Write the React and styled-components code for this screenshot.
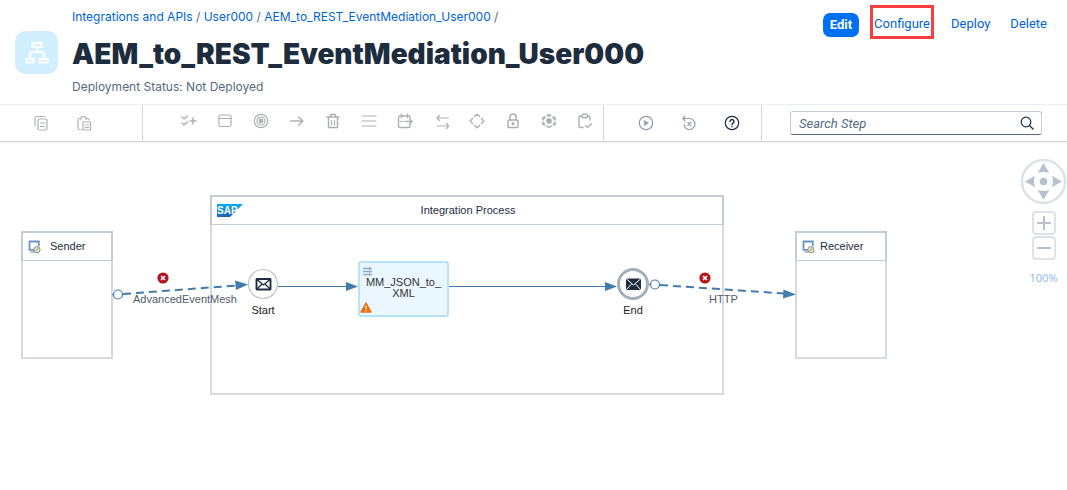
import React from "react";
import styled, { createGlobalStyle } from "styled-components";

const GlobalStyle = createGlobalStyle`
  *, *::before, *::after { box-sizing: border-box; }
  body {
    margin: 0;
    background: #fff;
    color: #1d2d3e;
    font-family: Roboto, "Liberation Sans", sans-serif;
    font-size: 13px;
  }
  button { font-family: inherit; cursor: pointer; }
`;

const Page = styled.div`
  display: flex;
  flex-direction: column;
  min-height: 100vh;
`;

const Header = styled.header`
  display: flex;
  align-items: flex-start;
  padding: 8px 12px 8px 15px;
  border-bottom: 1px solid #e9eeef;
`;

const Avatar = styled.div`
  display: flex;
  align-items: center;
  justify-content: center;
  flex: none;
  width: 43px;
  height: 43px;
  margin: 23px 14px 0 0;
  border-radius: 10px;
  background: #d1efff;
`;

const Heading = styled.div`
  flex: 1;
  min-width: 0;
`;

const Breadcrumb = styled.nav`
  font-family: Inter, sans-serif;
  font-size: 12px;
  line-height: 18px;
  color: #556b82;
`;

const Crumb = styled.a`
  color: #0064d9;
  text-decoration: none;
`;

const Title = styled.h1`
  margin: 10px 0 6px;
  font-family: Inter, Roboto, sans-serif;
  font-size: 28px;
  line-height: 36px;
  font-weight: 900;
`;

const Status = styled.p`
  margin: 0;
  font-family: Inter, sans-serif;
  font-size: 12px;
  line-height: 18px;
  color: #556b82;
`;

const Actions = styled.div`
  display: flex;
  align-items: flex-start;
`;

const ActionButton = styled.button`
  height: 24px;
  margin-top: ${(p) => (p.$primary ? 5 : 4)}px;
  padding: 0 ${(p) => (p.$primary ? 7 : 10)}px;
  border: 0;
  border-radius: 7px;
  background: ${(p) => (p.$primary ? "#0070f2" : "transparent")};
  color: ${(p) => (p.$primary ? "#fff" : "#0064d9")};
  font-size: 13px;
  line-height: 22px;
  font-weight: ${(p) => (p.$primary ? 700 : 400)};

  &:last-child { padding-right: 8px; }
`;

const Callout = styled.div`
  margin: -3px 7px 0 11px;
  padding: 4px 0 0;
  border: 3px solid #f93e3e;

  ${ActionButton} {
    margin: 0;
    padding: 0 1px;
  }
`;

const Toolbar = styled.div`
  display: flex;
  height: 37px;
  border-bottom: 1px solid #d4d6d8;
  box-shadow: 0 1px 2px #eceeee;
`;

const ToolGroup = styled.div`
  display: flex;
  align-items: center;
  gap: ${(p) => p.$gap}px;
  padding: ${(p) => p.$pad};
  border-right: 1px solid #d4d6d8;
`;

const ToolButton = styled.button`
  display: flex;
  width: 16px;
  height: 16px;
  padding: 0;
  border: 0;
  background: none;
  color: ${(p) => p.$color || "#adb0b2"};
`;

const SearchArea = styled.div`
  display: flex;
  flex: 1;
  align-items: center;
  padding: 0 25px 0 28px;
`;

const SearchField = styled.label`
  display: flex;
  flex: 1;
  align-items: center;
  height: 24px;
  padding: 0 7px 0 8px;
  border: 1px solid #c8cdd3;
  border-bottom-color: #556b82;
  border-radius: 3px;
`;

const SearchInput = styled.input`
  flex: 1;
  min-width: 0;
  padding: 0;
  border: 0;
  outline: 0;
  background: none;
  font: italic 13px Roboto, sans-serif;
  &::placeholder { color: #556b82; opacity: 1; }
`;

const Canvas = styled.main`
  position: relative;
  flex: 1;
  min-height: 348px;
  font-family: "Liberation Sans", Arial, sans-serif;
  font-size: 11px;
`;

const Pool = styled.section`
  position: absolute;
  left: ${(p) => p.$x}px;
  top: ${(p) => p.$y}px;
  width: ${(p) => p.$w}px;
  height: ${(p) => p.$h}px;
  border: 2px solid #d5dadd;
`;

const PoolHeader = styled.div`
  display: flex;
  align-items: center;
  height: 30px;
  margin: -2px;
  padding: 0 5px;
  border: 2px solid #c5ccd1;
  border-bottom-width: 1px;
`;

const PoolName = styled.span`
  flex: 1;
  text-align: ${(p) => (p.$center ? "center" : "left")};
  padding: 0 ${(p) => (p.$center ? 24 : 0)}px 2px 0;
  margin-left: ${(p) => p.$gap || 0}px;
`;

const Connectors = styled.svg`
  position: absolute;
  left: 0;
  top: 0;
  width: 100%;
  height: 100%;
  pointer-events: none;
`;

const EventNode = styled.div`
  position: absolute;
  left: ${(p) => p.$x - 30}px;
  top: ${(p) => p.$y - 16}px;
  width: 60px;
  display: flex;
  flex-direction: column;
  align-items: center;
  gap: 4px;
  line-height: 13px;
  color: #222;
`;

const Task = styled.div`
  position: absolute;
  left: 358px;
  top: 119px;
  width: 91px;
  height: 56px;
  padding-top: 14px;
  border: 2px solid #b5e3fa;
  border-radius: 3px;
  background: #ebf7ff;
  color: #333;
  line-height: 11px;
  text-align: center;
`;

const TaskGlyph = styled.svg`
  position: absolute;
  left: ${(p) => p.$x}px;
  top: ${(p) => p.$y}px;
`;

const FlowLabel = styled.span`
  position: absolute;
  left: ${(p) => p.$x}px;
  top: 151px;
  line-height: 13px;
  color: #515c69;
`;

const Navigator = styled.div`
  position: absolute;
  top: 16px;
  right: 0;
  width: 47px;
  display: flex;
  flex-direction: column;
  align-items: center;
`;

const ZoomButton = styled.button`
  display: flex;
  width: 24px;
  height: 24px;
  margin: ${(p) => p.$gap}px 0 0;
  padding: 0;
  align-items: center;
  justify-content: center;
  border: 2px solid #dce2e8;
  border-radius: 4px;
  background: #fff;
`;

const ZoomLevel = styled.output`
  margin-top: 11px;
  font: 11px/14px "Noto Sans", sans-serif;
  color: #8fbcf0;
`;

const Glyph = ({ children }) => (
  <svg width="16" height="16" viewBox="0 0 16 16" fill="none" stroke="currentColor" strokeWidth="1.2" strokeLinecap="round" strokeLinejoin="round" aria-hidden="true">
    {children}
  </svg>
);

const clipboardTools = [
  ["Copy", <><path d="M2 11V3.5A2 2 0 0 1 4 1.500h7.500" /><rect x="5" y="4" width="9" height="11" rx="1.500" /><path d="M7.500 8h4M7.500 11.500h4" /></>],
  ["Paste", <><path d="M5 14.500H3.500a1.500 1.500 0 0 1-1.500-1.500V5a1.500 1.500 0 0 1 1.500-1.500H5M10 3.500h1.500A1.500 1.500 0 0 1 13 5M5 4.500V3l1.500-1.500h2L10 3v1.500" /><path d="M7 7h7.500v8H7zM9.500 10h3M9.500 12.500h3" /></>],
];

const stepTools = [
  ["Events and checks", <path d="m1 4 2 1.800L6.500 3M1 10l2 1.800L6.500 9M9 8h6M12 5v6" strokeWidth="1.500" />],
  ["Participants", <><rect x="2" y="2" width="12" height="11.500" rx="1.500" /><path d="M2 5.500h12" /></>],
  ["Events", <><circle cx="8" cy="8" r="6.700" /><circle cx="8" cy="8" r="4" /><circle cx="8" cy="8" r="1.800" fill="currentColor" /></>],
  ["Connector", <path d="M1.500 8h12.500M9.500 4 14 8l-4.500 4" strokeWidth="1.400" />],
  ["Delete", <><path d="M2 4h12M5.500 4V1.500h5V4M3.500 4v10.500h9V4" strokeWidth="1.500" /><path d="M6.500 7.500v4.500M9.500 7.500v4.500" /></>],
  ["Menu", <path d="M1 3h14M1 8h14M1 13h14" />],
  ["Scheduler", <><path d="M13 5.500V4.500a1.500 1.500 0 0 0-1.500-1.500H3a1.500 1.500 0 0 0-1.500 1.500V13A1.500 1.500 0 0 0 3 14.500h8.500A1.500 1.500 0 0 0 13 13v-1.500M4.500 1v3.500M10.500 1v3.500M12.500 6l2.700 2.500-2.700 2.500M8.500 8.500h6.500" strokeWidth="1.400" /><path d="M3.500 8.500h.2M6 8.500h.2" strokeWidth="1.700" /></>],
  ["Mapping", <path d="M16 5H4M6.500 2.500 4 5l2.500 2.500M4 13h12M13.500 10.500l2.500 2.500-2.500 2.500" />],
  ["Routing", <path d="M5.500 3.500 8 1.200l2.500 2.300M12.500 5.500 14.800 8l-2.300 2.500M10.500 12.500 8 14.800l-2.500-2.300M3.500 10.500 1.200 8l2.300-2.500" strokeWidth="1.500" />],
  ["Security", <><rect x="3" y="7" width="10" height="7.500" rx="1" strokeWidth="1.500" /><path d="M5 7V4a3 3 0 0 1 6 0v3" strokeWidth="1.500" /><circle cx="8" cy="10.700" r="1" fill="currentColor" /></>],
  ["Persistence", <g fill="currentColor" strokeWidth=".6"><path d="M5.500 2.300 8 1l2.500 1.300L8 3.600ZM1.500 4.500l2.200-1.200 1 1.300L2.800 6l.2 1.500-1.500-.7ZM14.500 4.500l-2.200-1.200-1 1.300L13.200 6l-.2 1.500 1.500-.7ZM1.500 9l2.200 1.200v2.600l-2.200-1.200ZM14.500 9l-2.200 1.200v2.600l2.200-1.200ZM5.500 12.500l2.500 1.200 2.500-1.200v1L8 15l-2.500-1.500Z" /><path d="m8 5.300 2.400 1.300v2.800L8 10.700 5.600 9.400V6.600Z" /></g>],
  ["Validator", <path d="M6 14.500H3.500A1.500 1.500 0 0 1 2 13V4.500A1.500 1.500 0 0 1 3.500 3H5M10.500 3h1A1.500 1.500 0 0 1 13 4.500V7M5 4.500V2.500L6.500 1h2.500L10.500 2.500v2H5M8.500 12.500l2 2L14.500 11" strokeWidth="1.400" />],
];

const runTools = [
  ["Simulate", <><circle cx="8" cy="8" r="6.700" /><path d="m6.500 5.500 4 2.500-4 2.500Z" fill="currentColor" strokeWidth=".6" /></>, "#8f9bab"],
  ["Reset", <><path d="M2 3.500h6.500a5.500 5.500 0 1 1-5.500 6M4 1.200 1.800 3.500 4 5.800" /><path d="m6.800 7.300 3.400 3.400M10.200 7.300l-3.400 3.400" /></>, "#8f9bab"],
  ["Help", <><circle cx="8" cy="8" r="6.700" /><path d="M6 6.500a2 2 0 1 1 3 1.700c-.7.400-1 .8-1 1.500M8 11.600v.1" strokeWidth="1.400" /></>, "#1d2d3e"],
];

const ToolSet = ({ tools }) =>
  tools.map(([name, art, color]) => (
    <ToolButton key={name} aria-label={name} $color={color}>
      <Glyph>{art}</Glyph>
    </ToolButton>
  ));

const ParticipantIcon = () => (
  <svg width="13" height="14" viewBox="0 0 13 14" fill="none" aria-hidden="true">
    <path d="M6 9.800H1.500V1.500h9.300V6" stroke="#6c93c4" strokeWidth="1.800" />
    <path d="M2.500 12h4" stroke="#7c98b8" strokeWidth="1.200" />
    <circle cx="9" cy="9.700" r="3.100" fill="#f0eda6" stroke="#7d91a4" />
    <path d="m7.500 10.800 3-2.500" stroke="#6f8698" />
  </svg>
);

const SapLogo = () => (
  <svg width="26" height="13" viewBox="0 0 26 13" role="img" aria-label="SAP">
    <defs>
      <linearGradient id="sap" x1="0" y1="0" x2="0" y2="1">
        <stop offset="0" stopColor="#00aeef" />
        <stop offset="1" stopColor="#1c62b9" />
      </linearGradient>
    </defs>
    <path d="M0 0h26L13 13H0Z" fill="url(#sap)" />
    <text x="0" y="10" fill="#fff" fontFamily="Liberation Sans" fontWeight="700" fontSize="10">SAP</text>
  </svg>
);

const Envelope = ({ filled }) => (
  <svg width="32" height="32" viewBox="0 0 32 32" aria-hidden="true">
    <circle cx="16" cy="16" r="14.500" fill="#fff" stroke={filled ? "#a5afba" : "#bcc3ca"} strokeWidth={filled ? 3 : 1.200} />
    {filled ? (
      <>
        <rect x="9" y="10.500" width="15" height="11.500" rx="1.500" fill="#1d2d3e" />
        <path d="m9.500 11 7 6 7-6M9.500 21.500l5-5.500M23.500 21.500l-5-5.500" fill="none" stroke="#fff" />
      </>
    ) : (
      <>
        <rect x="9.500" y="11" width="14" height="10.500" rx=".5" fill="#fff" stroke="#1d2d3e" strokeWidth="1.900" />
        <path d="m10 11.500 6.500 5.500 6.500-5.500M10 21l5-5M23 21l-5-5" fill="none" stroke="#1d2d3e" strokeWidth="1.300" />
      </>
    )}
  </svg>
);

const ErrorBadge = ({ x, y }) => (
  <g>
    <circle cx={x} cy={y} r="5.600" fill="#b5121b" />
    <path d={`M${x - 2} ${y - 2}l4 4m0-4l-4 4`} stroke="#fff" strokeWidth="1.700" />
  </g>
);

export default function App() {
  return (
    <Page>
      <GlobalStyle />
      <Header>
        <Avatar>
          <svg width="24" height="24" viewBox="0 0 24 24" fill="none" stroke="#fff" strokeWidth="2" aria-hidden="true">
            <path d="M7.500 2h9v4h-9zM1.500 18h7v3.500h-7zM14.500 18h8v3.500h-8zM12 6v5M5 18v-4q0-3 3-3h8q3 0 3 3v4" />
          </svg>
        </Avatar>
        <Heading>
          <Breadcrumb aria-label="Breadcrumb">
            <Crumb href="#design">Integrations and APIs</Crumb> / <Crumb href="#package">User000</Crumb> /{" "}
            <Crumb href="#flow">AEM_to_REST_EventMediation_User000</Crumb> /
          </Breadcrumb>
          <Title>AEM_to_REST_EventMediation_User000</Title>
          <Status>Deployment Status: Not Deployed</Status>
        </Heading>
        <Actions>
          <ActionButton $primary>Edit</ActionButton>
          <Callout>
            <ActionButton>Configure</ActionButton>
          </Callout>
          <ActionButton>Deploy</ActionButton>
          <ActionButton>Delete</ActionButton>
        </Actions>
      </Header>

      <Toolbar role="toolbar">
        <ToolGroup $gap={27} $pad="0 50px 0 33px"><ToolSet tools={clipboardTools} /></ToolGroup>
        <ToolGroup $gap={20} $pad="0 10px 4px 38px"><ToolSet tools={stepTools} /></ToolGroup>
        <ToolGroup $gap={27} $pad="0 21px 0 34px"><ToolSet tools={runTools} /></ToolGroup>
        <SearchArea>
          <SearchField>
            <SearchInput type="search" placeholder="Search Step" aria-label="Search Step" />
            <svg width="14" height="14" viewBox="0 0 14 14" fill="none" stroke="#1d2d3e" strokeWidth="1.200" aria-hidden="true">
              <circle cx="6" cy="6" r="4.800" />
              <path d="m9.500 9.500 4 4" />
            </svg>
          </SearchField>
        </SearchArea>
      </Toolbar>

      <Canvas>
        <Pool $x={21} $y={89} $w={92} $h={128}>
          <PoolHeader><ParticipantIcon /><PoolName $gap={9}>Sender</PoolName></PoolHeader>
        </Pool>
        <Pool $x={210} $y={53} $w={514} $h={200}>
          <PoolHeader><SapLogo /><PoolName $center>Integration Process</PoolName></PoolHeader>
        </Pool>
        <Pool $x={795} $y={89} $w={92} $h={128}>
          <PoolHeader><ParticipantIcon /><PoolName $gap={5}>Receiver</PoolName></PoolHeader>
        </Pool>

        <Connectors aria-hidden="true">
          <g stroke="#427cac" fill="none">
            <path d="M112 152.500h2M278 144.500h70M449 144.500h158M649 142.500h2" strokeWidth="1.200" />
            <path d="M123 152 237 143.500M660 143l124 8.500" strokeWidth="2" strokeDasharray="8 5" />
            <circle cx="118" cy="152.500" r="4.500" fill="#fff" strokeWidth="1.200" />
            <circle cx="655" cy="142.500" r="4.500" fill="#fff" strokeWidth="1.200" />
          </g>
          <g fill="#427cac">
            <path d="m235 138.500 13 4-12 5.500ZM346 140l12 4.500-12 4.500ZM605 140l12 4.500-12 4.500ZM783.500 147.500l12.500 5-13 4Z" />
          </g>
          <ErrorBadge x={163} y={136} />
          <ErrorBadge x={705} y={136} />
        </Connectors>

        <FlowLabel $x={133}>AdvancedEventMesh</FlowLabel>
        <FlowLabel $x={709}>HTTP</FlowLabel>

        <EventNode $x={263} $y={142}><Envelope />Start</EventNode>
        <Task>
          <TaskGlyph $x={3} $y={4} width="10" height="10" viewBox="0 0 10 10" fill="none" stroke="#8fabc6">
            <path d="M0 1.500h9M0 4.500h9M0 7.500h9" strokeWidth="1.300" />
            <path d="M6.500 0v3M6.500 3.500v2.500M6.500 6.500v2.500" />
          </TaskGlyph>
          MM_JSON_to_<br />XML
          <TaskGlyph $x={0} $y={39} width="12" height="11" viewBox="0 0 12 11">
            <path d="M6 1 11 10H1Z" fill="#e9730c" stroke="#e9730c" strokeWidth="1.500" strokeLinejoin="round" />
            <path d="M6 3.500v3.500M6 8v1.200" stroke="#fff" strokeWidth="1.200" />
          </TaskGlyph>
        </Task>
        <EventNode $x={633} $y={142}><Envelope filled />End</EventNode>

        <Navigator>
          <svg width="47" height="47" viewBox="0 0 47 47" aria-hidden="true">
            <circle cx="23.500" cy="23.500" r="21.500" fill="#fff" stroke="#dce2e8" strokeWidth="2.500" />
            <g fill="#b6c3cf">
              <circle cx="23.500" cy="23.500" r="3.800" />
              <path d="m23.500 5 5.800 10q-5.800-2-11.600 0ZM23.500 42l5.800-10q-5.800 2-11.600 0ZM5 23.500l10-5.800q-2 5.800 0 11.600ZM42 23.500l-10-5.800q2 5.800 0 11.600Z" />
            </g>
          </svg>
          <ZoomButton $gap={6} aria-label="Zoom in">
            <svg width="14" height="14" viewBox="0 0 14 14" stroke="#b6c3cf" strokeWidth="2"><path d="M0 7h14M7 0v14" /></svg>
          </ZoomButton>
          <ZoomButton $gap={1} aria-label="Zoom out">
            <svg width="14" height="14" viewBox="0 0 14 14" stroke="#b6c3cf" strokeWidth="2"><path d="M0 7h14" /></svg>
          </ZoomButton>
          <ZoomLevel>100%</ZoomLevel>
        </Navigator>
      </Canvas>
    </Page>
  );
}
